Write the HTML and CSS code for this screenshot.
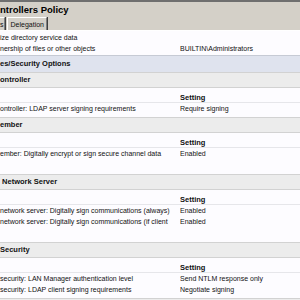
FILE: index.html
```html
<!DOCTYPE html>
<html lang="en">
<head>
    <meta charset="UTF-8">
    <meta name="viewport" content="width=device-width, initial-scale=1.0">
    <title>Controllers Policy</title>
    <link rel="stylesheet" href="styles.css">
</head>
<body>
    <div class="pane">
        <div class="titlebar">ntrollers Policy</div>
        <div class="tabs">
            <span class="tab tab-cut">s</span>
            <span class="tab">Delegation</span>
        </div>
        <div class="report">
            <table class="rows top-rows">
                <tr><td>ize directory service data</td><td></td></tr>
                <tr><td>nership of files or other objects</td><td>BUILTIN\Administrators</td></tr>
            </table>

            <div class="head-main">es/Security Options</div>

            <div class="head-sub">ontroller</div>
            <table class="rows">
                <tr><th></th><th>Setting</th></tr>
                <tr><td>ontroller: LDAP server signing requirements</td><td>Require signing</td></tr>
            </table>

            <div class="head-sub">ember</div>
            <table class="rows">
                <tr><th></th><th>Setting</th></tr>
                <tr class="wrapped"><td>ember: Digitally encrypt or sign secure channel data</td><td>Enabled</td></tr>
            </table>

            <div class="head-sub">&nbsp;Network Server</div>
            <table class="rows">
                <tr><th></th><th>Setting</th></tr>
                <tr><td>network server: Digitally sign communications (always)</td><td>Enabled</td></tr>
                <tr class="wrapped"><td>network server: Digitally sign communications (if client</td><td>Enabled</td></tr>
            </table>

            <div class="head-sub">Security</div>
            <table class="rows">
                <tr><th></th><th>Setting</th></tr>
                <tr><td>security: LAN Manager authentication level</td><td>Send NTLM response only</td></tr>
                <tr><td>security: LDAP client signing requirements</td><td>Negotiate signing</td></tr>
            </table>

            <div class="head-sub"></div>
        </div>
    </div>
</body>
</html>
```

FILE: styles.css
```css
body {
    margin: 0;
    font-family: "Liberation Sans", Arial, sans-serif;
    background-color: #fdfcff;
    color: #111;
    overflow: hidden;
}
.pane {
    border-top: 2px solid #6f6f6f;
}
.titlebar {
    background-color: #d4d0c8;
    height: 15px;
    line-height: 15px;
    font-size: 9.5px;
    font-weight: bold;
    color: #000;
    white-space: nowrap;
}
.tabs {
    background-color: #d4d0c8;
    height: 13px;
    display: flex;
    align-items: flex-end;
    border-bottom: 1px solid #fff;
}
.tab {
    height: 13px;
    box-sizing: border-box;
    font-size: 7px;
    line-height: 13px;
    padding: 0 2px 0 3px;
    border-top: 1px solid #fff;
    border-left: 1px solid #fff;
    border-right: 1px solid #808080;
    box-shadow: 1px 0 0 #404040;
}
.tab-cut {
    padding: 0;
    border-left: none;
    margin-right: 2px;
}
.report {
    padding-top: 1px;
}
.rows {
    width: 100%;
    table-layout: fixed;
    border-collapse: collapse;
    margin-bottom: 3px;
}
.rows td,
.rows th {
    padding: 0;
    font-size: 7px;
    line-height: 11px;
    vertical-align: top;
    text-align: left;
    white-space: nowrap;
    overflow: hidden;
}
.rows td:first-child,
.rows th:first-child {
    width: 176px;
    padding-right: 4px;
}
.rows .wrapped td {
    padding-bottom: 12px;
}
.rows th {
    font-size: 7.5px;
    font-weight: bold;
    box-shadow: inset 0 -1px 0 #e6e6ea;
}
.top-rows {
    margin-bottom: 0;
}
.head-main {
    margin-top: 1px;
    height: 16px;
    line-height: 16px;
    border-top: 1px solid #c6cad4;
    background-color: #dfe3ee;
    font-size: 7.5px;
    font-weight: bold;
    white-space: nowrap;
}
.head-sub {
    height: 14px;
    line-height: 14px;
    border-top: 1px solid #d2d2d2;
    border-bottom: 1px solid #d2d2d2;
    background-color: #ececec;
    font-size: 7.5px;
    font-weight: bold;
    white-space: nowrap;
    margin-bottom: 4px;
}
```
